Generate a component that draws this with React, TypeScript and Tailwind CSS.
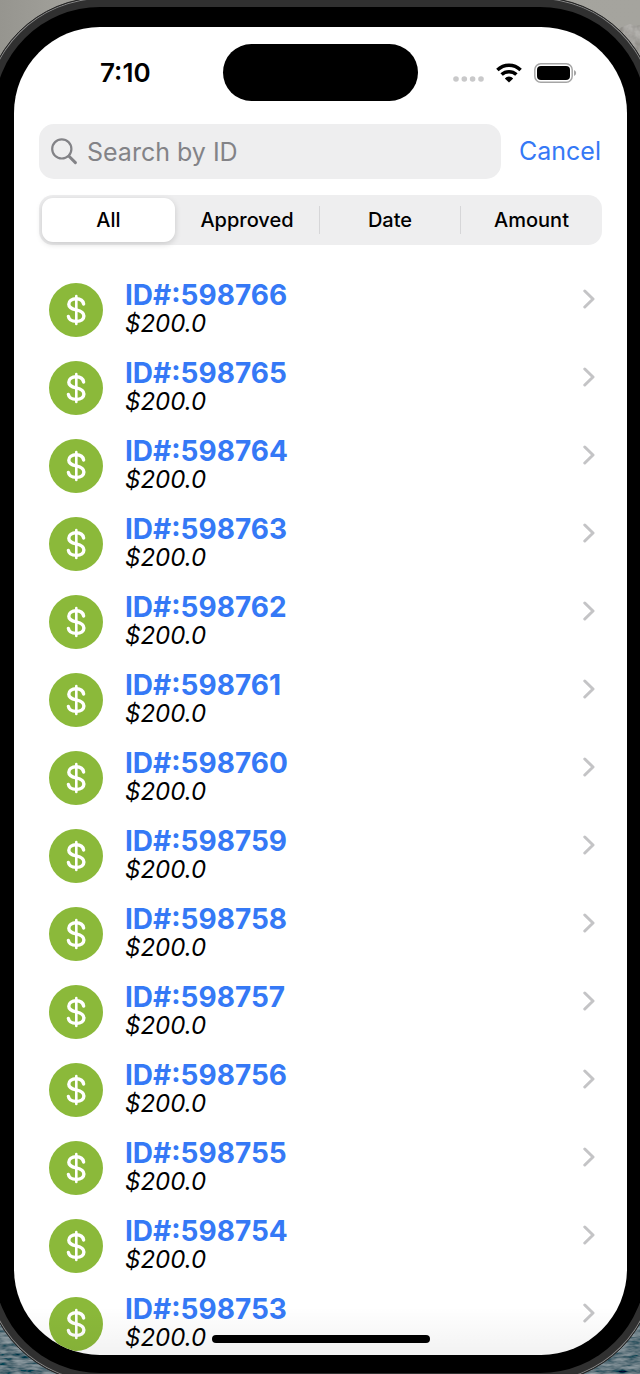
import React, { useState } from "react";

const filters = ["All", "Approved", "Date", "Amount"];

const claims = Array.from({ length: 14 }, (_, i) => ({ id: 598766 - i, amount: "$200.0" }));

function Wallpaper() {
  return (
    <svg className="absolute inset-0 h-full w-full" viewBox="0 0 640 1374" preserveAspectRatio="none" aria-hidden="true">
      <defs>
        <linearGradient id="sky" x1="0" y1="0" x2="1" y2="0">
          <stop offset="0" stopColor="#96958f" />
          <stop offset="0.12" stopColor="#a3a29c" />
          <stop offset="1" stopColor="#a5a49e" />
        </linearGradient>
        <filter id="rock" x="0" y="0" width="1" height="1">
          <feTurbulence type="fractalNoise" baseFrequency="0.12" numOctaves="3" seed="4" />
          <feColorMatrix values="0.3 0 0 0 0.23  0.3 0 0 0 0.22  0.3 0 0 0 0.2  0 0 0 0 1" />
          <feComposite in2="SourceGraphic" operator="in" />
        </filter>
        <filter id="waves" x="0" y="0" width="1" height="1">
          <feTurbulence type="fractalNoise" baseFrequency="0.07 0.3" numOctaves="3" seed="9" />
          <feColorMatrix values="0.5 0 0 0 -0.13  0.5 0 0 0 -0.07  0.5 0 0 0 -0.04  0 0 0 0 1" />
        </filter>
      </defs>
      <rect width="640" height="700" fill="url(#sky)" />
      <path d="M616 30 L622 27 L630 24 L636 26 L640 25 V80 H616 Z" fill="#8d8b87" filter="url(#rock)" />
      <rect y="1300" width="640" height="74" fill="#3a4c58" filter="url(#waves)" />
    </svg>
  );
}

function StatusBar() {
  return (
    <header className="flex h-[57px] shrink-0 items-center justify-between pr-[50px] pl-[86px]">
      <span className="w-[123px] text-[26px] leading-8 font-semibold">7:10</span>
      <span className="h-[57px] w-[195px] rounded-full bg-black" />
      <span className="flex w-[159px] items-center justify-end gap-3">
        <svg className="mt-3 h-[6px] w-[31px]" viewBox="0 0 31 6" fill="#c9c9ca" aria-hidden="true">
          <circle cx="3" cy="3" r="2.8" />
          <circle cx="11.3" cy="3" r="2.8" />
          <circle cx="19.6" cy="3" r="2.8" />
          <circle cx="28" cy="3" r="2.8" />
        </svg>
        <svg className="h-5 w-[26px]" viewBox="0 0 26 20" fill="none" stroke="#000" strokeWidth="3.5" aria-hidden="true">
          <path d="M1.4 7 A16.6 16.6 0 0 1 24.6 7" />
          <path d="M5.6 11.6 A10.8 10.8 0 0 1 20.4 11.6" />
          <path d="M13 19.6 L8.8 15.4 A5.8 5.8 0 0 1 17.2 15.4 Z" fill="#000" stroke="none" />
        </svg>
        <svg className="h-5 w-[43px]" viewBox="0 0 43 20" aria-hidden="true">
          <rect x="0.8" y="0.8" width="37.4" height="18.4" rx="6" fill="none" stroke="#a5a5a5" strokeWidth="1.5" />
          <rect x="3" y="3" width="33" height="14" rx="4" fill="#000" />
          <path d="M40 7 Q42.2 8 42.2 10 Q42.2 12 40 13 Z" fill="#a5a5a5" />
        </svg>
      </span>
    </header>
  );
}

function ClaimRow({ id, amount }: { id: number; amount: string }) {
  return (
    <li>
      <a href={"#" + id} className="flex h-[78px] items-start">
        <svg className="mt-1 h-[54px] w-[54px] shrink-0" viewBox="0 0 54 54" aria-hidden="true">
          <circle cx="27" cy="27" r="27" fill="#8bb93a" />
          <g fill="none" stroke="#fff" strokeWidth="3.4" strokeLinecap="round">
            <path d="M34.6 21 C34 17.6 31.2 15.8 27.3 15.8 C22.8 15.8 19.8 18 19.8 21.2 C19.8 24.6 22.4 25.8 27.2 26.9 C32.4 28.1 34.9 29.6 34.9 33 C34.9 36.4 32 38.4 27.5 38.4 C22.8 38.4 19.8 36.6 19.4 33.4" />
            <path d="M27.3 13 V41" strokeWidth="2.6" />
          </g>
        </svg>
        <span className="ml-[22px] flex-1">
          <span className="block text-[28px] leading-8 font-bold text-[#3579f6]">ID#:{id}</span>
          <span className="block text-2xl leading-[26px] text-black italic">{amount}</span>
        </span>
        <svg className="mt-[10px] h-5 w-3" viewBox="0 0 12 20" fill="none" stroke="#c4c4c6" strokeWidth="3" strokeLinecap="round" strokeLinejoin="round" aria-hidden="true">
          <path d="M1.8 2 L10 10 L1.8 18" />
        </svg>
      </a>
    </li>
  );
}

export default function App() {
  const [active, setActive] = useState("All");
  const [query, setQuery] = useState("");

  return (
    <div className="relative flex h-screen flex-col overflow-hidden bg-[#a3a29c] font-['Inter','Liberation_Sans',sans-serif] text-black">
      <Wallpaper />
      <div className="relative -mx-4 -mt-[3px] -mb-[9px] flex min-h-0 flex-1 rounded-[118px] border border-[#222] bg-[#303030] p-[9px] shadow-[inset_0_0_0_1px_#8a8a8a]">
        <div className="flex min-h-0 flex-1 rounded-[106px] bg-black pt-5 pr-[19px] pb-[18px] pl-5">
          <main className="relative flex min-h-0 flex-1 flex-col overflow-hidden rounded-[86px] bg-white pt-[17px]">
            <StatusBar />
            <div className="mt-[23px] flex items-center gap-[18px] pr-[26px] pl-[25px]">
              <label className="flex h-[55px] min-w-0 flex-1 items-center gap-2 rounded-[15px] bg-[#eeeeef] px-3">
                <svg className="h-7 w-7 shrink-0" viewBox="0 0 28 28" fill="none" stroke="#838387" strokeLinecap="round" aria-hidden="true">
                  <circle cx="10.8" cy="10.9" r="9.6" strokeWidth="2.2" />
                  <path d="M18 18.2 L24.4 24.6" strokeWidth="3" />
                </svg>
                <input
                  type="text"
                  aria-label="Search by ID"
                  placeholder="Search by ID"
                  value={query}
                  onChange={(e) => setQuery(e.target.value)}
                  className="min-w-0 flex-1 bg-transparent text-[25px] leading-8 outline-none placeholder:text-[#838387]"
                />
              </label>
              <button type="button" className="pb-[2px] text-[25px] leading-8 text-[#3579f6]">Cancel</button>
            </div>
            <div className="mx-[25px] mt-4 grid h-[50px] shrink-0 grid-cols-[133fr_145fr_141fr_141fr] rounded-[14px] bg-[#eeeeef] py-[3px] pl-[3px]">
              {filters.map((name, i) => (
                <button
                  key={name}
                  type="button"
                  aria-pressed={active === name}
                  onClick={() => setActive(name)}
                  className={
                    active === name
                      ? "rounded-[11px] bg-white text-xl font-medium shadow-[0_2px_6px_rgba(0,0,0,0.16)]"
                      : "flex items-center text-xl font-medium"
                  }
                >
                  <span className="flex-1">{name}</span>
                  {active !== name && i < filters.length - 1 && <span className="h-7 w-px bg-[#d6d6d8]" />}
                </button>
              ))}
            </div>
            <ul className="mt-[34px] min-h-0 flex-1 overflow-hidden pr-8 pl-[35px]">
              {claims.map((c) => (
                <ClaimRow key={c.id} id={c.id} amount={c.amount} />
              ))}
            </ul>
            <div className="pointer-events-none absolute inset-x-0 bottom-0 flex h-12 items-end justify-center bg-linear-to-b from-transparent to-black/5 pb-3">
              <span className="h-2 w-[218px] rounded-full bg-black" />
            </div>
          </main>
        </div>
      </div>
    </div>
  );
}
